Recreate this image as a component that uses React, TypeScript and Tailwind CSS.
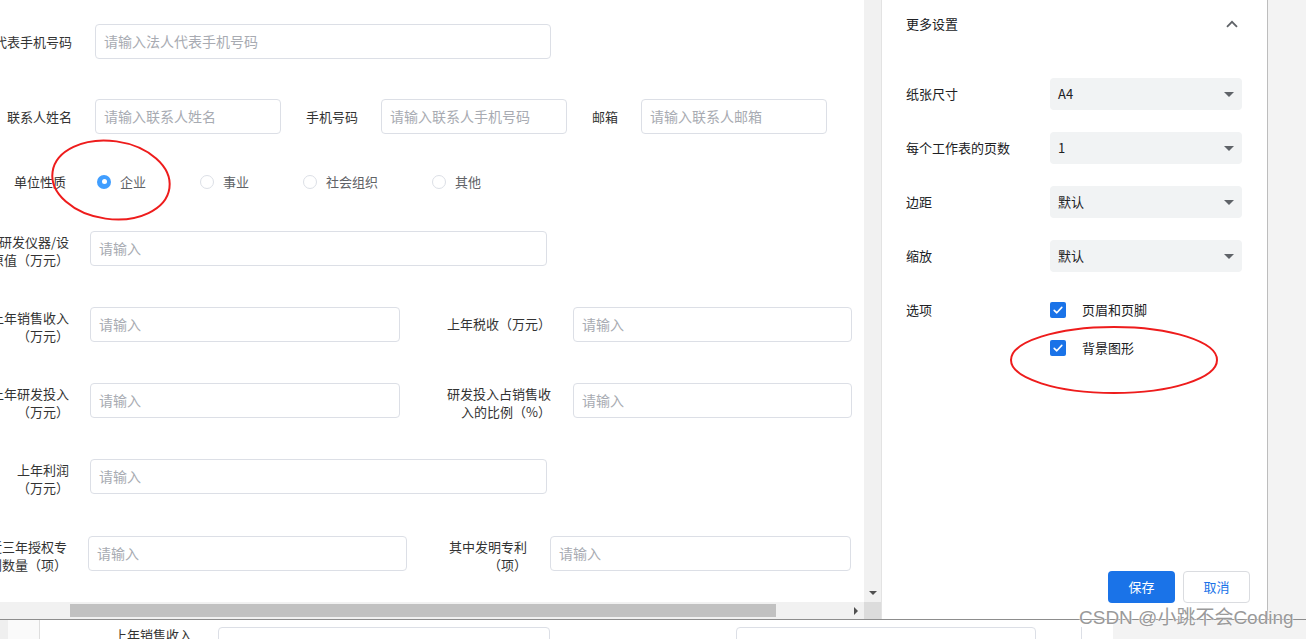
import type { ReactNode } from "react";

function Field({ className, placeholder = "请输入" }: { className: string; placeholder?: string }) {
  return (
    <div
      className={`flex h-[35px] shrink-0 items-center rounded-[4px] border border-[#dcdfe6] bg-white px-[8px] text-[14px] text-[#a8abb2] ${className}`}
    >
      {placeholder}
    </div>
  );
}

function Label({ className, children, two = false }: { className: string; children: ReactNode; two?: boolean }) {
  return (
    <div className={`flex shrink-0 justify-end ${className}`}>
      <div
        className={`shrink-0 whitespace-nowrap text-right text-[13px] leading-[18px] text-[#333] ${two ? "translate-y-[3px]" : ""}`}
      >
        {children}
      </div>
    </div>
  );
}

function Radio({ label, checked = false }: { label: string; checked?: boolean }) {
  return (
    <div className="flex items-center">
      {checked ? (
        <span className="flex h-[14px] w-[14px] items-center justify-center rounded-full bg-[#409eff]">
          <span className="h-[5px] w-[5px] rounded-full bg-white" />
        </span>
      ) : (
        <span className="h-[14px] w-[14px] rounded-full border border-[#dcdfe6] bg-white" />
      )}
      <span className="ml-[9px] text-[13px] leading-[18px] text-[#606266]">{label}</span>
    </div>
  );
}

function Select({ value }: { value: string }) {
  return (
    <div className="flex h-[32px] w-[192px] items-center justify-between rounded-[4px] bg-[#f1f3f4] pl-[8px] pr-[8px] text-[13px] text-[#202124]">
      <span>{value}</span>
      <span className="h-0 w-0 border-l-[5px] border-r-[5px] border-t-[5px] border-l-transparent border-r-transparent border-t-[#5f6368]" />
    </div>
  );
}

function Check({ label }: { label: string }) {
  return (
    <div className="flex h-[16px] items-center">
      <span className="flex h-[16px] w-[16px] items-center justify-center rounded-[2px] bg-[#1a73e8]">
        <svg width="12" height="12" viewBox="0 0 12 12" fill="none">
          <path d="M2.2 6.3 L4.8 8.8 L9.8 3.4" stroke="#fff" strokeWidth="1.6" strokeLinecap="round" strokeLinejoin="round" />
        </svg>
      </span>
      <span className="ml-[16px] text-[13px] leading-[16px] text-[#202124]">{label}</span>
    </div>
  );
}

function SettingRow({ label, value }: { label: string; value: string }) {
  return (
    <div className="flex items-center">
      <span className="w-[144px] text-[13px] text-[#202124]">{label}</span>
      <Select value={value} />
    </div>
  );
}

export default function App() {
  return (
    <div className="relative h-[639px] w-[1306px] overflow-hidden bg-[#f3f3f3] font-['Noto_Sans_CJK_SC',sans-serif]">
      <div className="flex h-[620px] border-b border-[#8d8d8d]">
        {/* preview with scrollbars */}
        <div className="flex w-[881px] flex-col">
          <div className="flex h-[602px]">
            <div className="w-[864px] overflow-hidden bg-white">
              <div className="flex flex-col pt-[24px]">
                <div className="flex items-center">
                  <Label className="w-[72px]">代表手机号码</Label>
                  <Field className="ml-[23px] w-[456px]" placeholder="请输入法人代表手机号码" />
                </div>

                <div className="mt-[40px] flex items-center">
                  <Label className="w-[72px]">联系人姓名</Label>
                  <Field className="ml-[23px] w-[186px]" placeholder="请输入联系人姓名" />
                  <Label className="w-[77px]">手机号码</Label>
                  <Field className="ml-[23px] w-[186px]" placeholder="请输入联系人手机号码" />
                  <Label className="w-[51px]">邮箱</Label>
                  <Field className="ml-[23px] w-[186px]" placeholder="请输入联系人邮箱" />
                </div>

                <div className="mt-[30px] flex h-[35px] items-center">
                  <Label className="w-[66px]">单位性质</Label>
                  <div className="ml-[31px] flex items-center gap-[54px]">
                    <Radio label="企业" checked />
                    <Radio label="事业" />
                    <Radio label="社会组织" />
                    <Radio label="其他" />
                  </div>
                </div>

                <div className="mt-[31px] flex items-center">
                  <Label className="w-[69px]" two>
                    原研发仪器/设
                    <br />
                    备原值（万元）
                  </Label>
                  <Field className="ml-[21px] w-[457px]" />
                </div>

                <div className="mt-[40px] flex items-center">
                  <Label className="w-[69px]" two>
                    上年销售收入
                    <br />
                    （万元）
                  </Label>
                  <Field className="ml-[21px] w-[310px]" />
                  <Label className="w-[151px]">上年税收（万元）</Label>
                  <Field className="ml-[22px] w-[279px]" />
                </div>

                <div className="mt-[40px] flex items-center">
                  <Label className="w-[69px]" two>
                    上年研发投入
                    <br />
                    （万元）
                  </Label>
                  <Field className="ml-[21px] w-[310px]" />
                  <Label className="w-[151px]" two>
                    研发投入占销售收
                    <br />
                    入的比例（%）
                  </Label>
                  <Field className="ml-[22px] w-[279px]" />
                </div>

                <div className="mt-[40px] flex items-center">
                  <Label className="w-[69px]" two>
                    上年利润
                    <br />
                    （万元）
                  </Label>
                  <Field className="ml-[21px] w-[457px]" />
                </div>

                <div className="mt-[41px] flex items-center">
                  <Label className="w-[67px]" two>
                    近三年授权专
                    <br />
                    利数量（项）
                  </Label>
                  <Field className="ml-[21px] w-[319px]" />
                  <Label className="w-[120px]" two>
                    其中发明专利
                    <br />
                    （项）
                  </Label>
                  <Field className="ml-[23px] w-[301px]" />
                </div>
              </div>
            </div>
            <div className="flex w-[17px] flex-col items-center justify-end bg-[#f1f1f1] pb-[7px]">
              <span className="h-0 w-0 border-l-[4px] border-r-[4px] border-t-[4px] border-l-transparent border-r-transparent border-t-[#505050]" />
            </div>
          </div>
          <div className="flex h-[17px]">
            <div className="flex w-[864px] items-center bg-[#f1f1f1]">
              <div className="ml-[70px] h-[13px] w-[706px] bg-[#c1c1c1]" />
              <span className="ml-auto mr-[6px] h-0 w-0 border-b-[4px] border-l-[4px] border-t-[4px] border-b-transparent border-l-[#505050] border-t-transparent" />
            </div>
            <div className="w-[17px] bg-[#dcdcdc]" />
          </div>
        </div>

        {/* settings panel */}
        <div className="flex w-[387px] flex-col border-l border-r border-l-[#e3e3e3] border-r-[#bdbdbd] bg-white">
          <div className="flex h-[47px] items-center justify-between pl-[24px] pr-[29px]">
            <span className="text-[13px] text-[#202124]">更多设置</span>
            <svg width="12" height="8" viewBox="0 0 12 8" fill="none">
              <path d="M1 6.8 L6 1.8 L11 6.8" stroke="#5f6368" strokeWidth="1.8" />
            </svg>
          </div>
          <div className="mt-[31px] flex flex-col gap-[22px] pl-[24px]">
            <SettingRow label="纸张尺寸" value="A4" />
            <SettingRow label="每个工作表的页数" value="1" />
            <SettingRow label="边距" value="默认" />
            <SettingRow label="缩放" value="默认" />
          </div>
          <div className="mt-[30px] flex pl-[24px]">
            <span className="w-[144px] text-[13px] leading-[16px] text-[#202124]">选项</span>
            <div className="flex flex-col gap-[22px]">
              <Check label="页眉和页脚" />
              <Check label="背景图形" />
            </div>
          </div>
          <div className="mt-auto flex justify-end gap-[8px] pb-[16px] pr-[17px]">
            <button className="h-[32px] w-[67px] rounded-[4px] bg-[#1a73e8] text-[13px] text-white">保存</button>
            <button className="h-[32px] w-[67px] rounded-[4px] border border-[#dadce0] bg-white text-[13px] text-[#1a73e8]">
              取消
            </button>
          </div>
        </div>
        <div className="flex-1" />
      </div>

      {/* page underneath the dialog */}
      <div className="flex h-[19px]">
        <div className="w-[8px] bg-[#efefef]" />
        <div className="w-[31px] bg-[#fafafa]" />
        <div className="w-[1px] bg-[#dedede]" />
        <div className="flex w-[1073px] items-start bg-white">
          <span className="ml-[74px] mt-[6px] w-[78px] shrink-0 whitespace-nowrap text-[13px] leading-[18px] text-[#333]">
            上年销售收入
          </span>
          <div className="ml-[26px] mt-[7px] h-[30px] w-[332px] shrink-0 rounded-[4px] border border-[#dcdfe6]" />
          <div className="ml-[186px] mt-[7px] h-[30px] w-[300px] shrink-0 rounded-[4px] border border-[#dcdfe6]" />
          <div className="ml-[45px] mt-[7px] h-[20px] w-[1px] shrink-0 bg-[#dcdfe6]" />
        </div>
        <div className="flex-1" />
      </div>

      {/* hand-drawn marks */}
      <svg className="pointer-events-none absolute inset-0" width="1306" height="639" viewBox="0 0 1306 639" fill="none">
        <ellipse cx="111" cy="180" rx="59" ry="39" transform="rotate(8 111 180)" stroke="#ee1c1c" strokeWidth="2" />
        <ellipse cx="1114" cy="360" rx="103" ry="33" stroke="#ee1c1c" strokeWidth="2" />
      </svg>

      <div className="pointer-events-none absolute left-[1079px] top-[604px] whitespace-nowrap font-['Liberation_Sans','Noto_Sans_CJK_SC',sans-serif] text-[19px] text-[#9a9a9a] [text-shadow:0_0_2px_#fff,0_0_1px_#fff]">
        CSDN @小跳不会Coding
      </div>
    </div>
  );
}
